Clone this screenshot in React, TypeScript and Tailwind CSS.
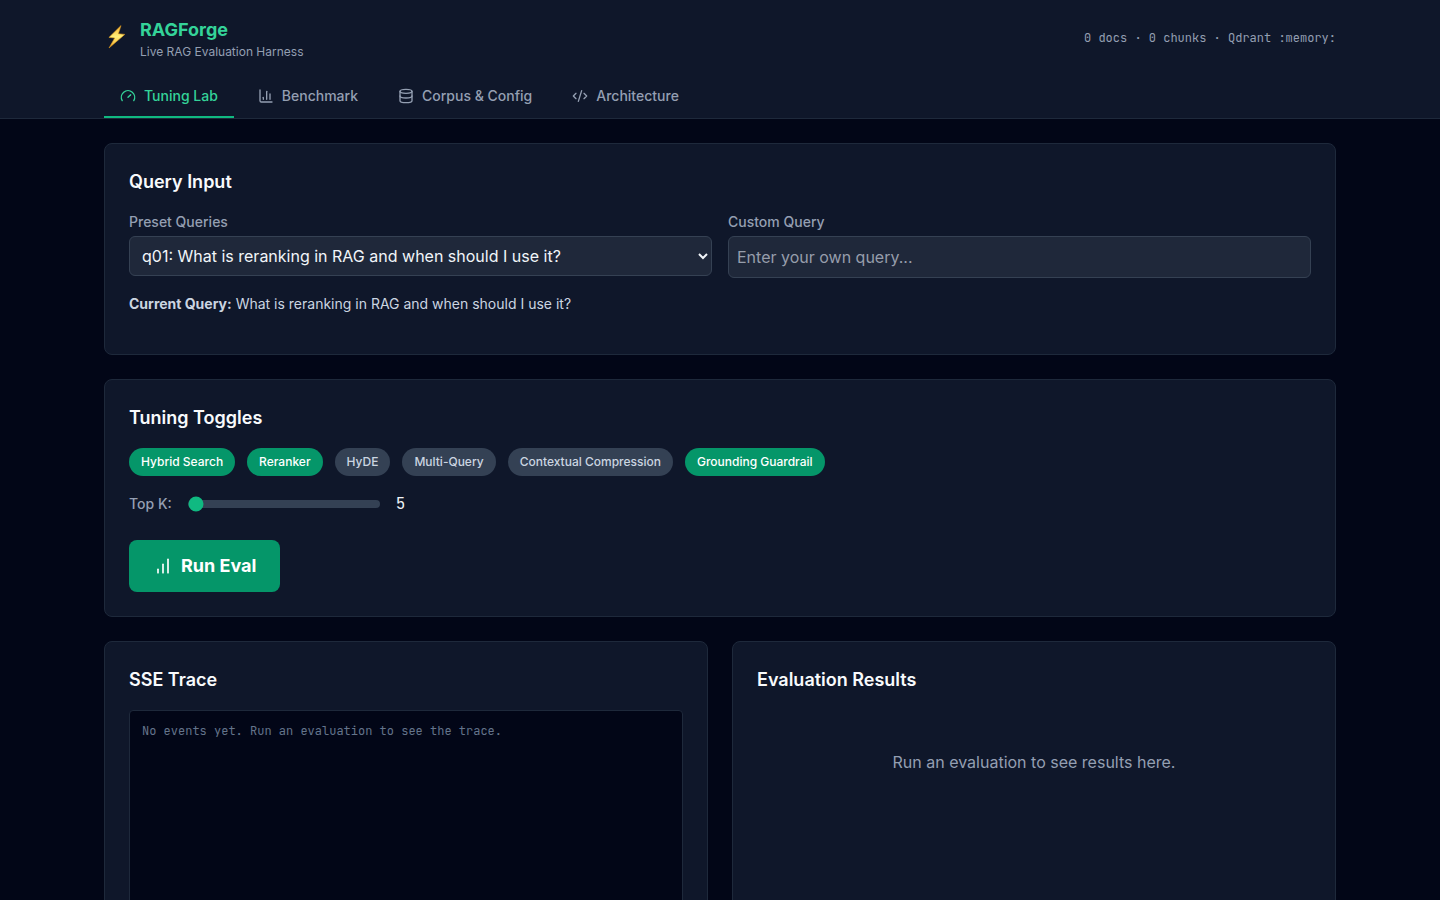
import { useState } from 'react'
import clsx from 'clsx'

const tabs = [
  {
    id: 'tuning',
    label: 'Tuning Lab',
    icon: (
      <>
        <path d="m12 14 4-4" />
        <path d="M3.34 19a10 10 0 1 1 17.32 0" />
      </>
    ),
  },
  {
    id: 'benchmark',
    label: 'Benchmark',
    icon: (
      <>
        <path d="M3 3v16a2 2 0 0 0 2 2h16" />
        <path d="M18 17V9" />
        <path d="M13 17V5" />
        <path d="M8 17v-3" />
      </>
    ),
  },
  {
    id: 'corpus',
    label: 'Corpus & Config',
    icon: (
      <>
        <ellipse cx="12" cy="5" rx="9" ry="3" />
        <path d="M3 5v14a9 3 0 0 0 18 0V5" />
        <path d="M3 12a9 3 0 0 0 18 0" />
      </>
    ),
  },
  {
    id: 'architecture',
    label: 'Architecture',
    icon: (
      <>
        <path d="m18 16 4-4-4-4" />
        <path d="m6 8-4 4 4 4" />
        <path d="m14.5 4-5 16" />
      </>
    ),
  },
]

const initialToggles = [
  { label: 'Hybrid Search', on: true },
  { label: 'Reranker', on: true },
  { label: 'HyDE', on: false },
  { label: 'Multi-Query', on: false },
  { label: 'Contextual Compression', on: false },
  { label: 'Grounding Guardrail', on: true },
]

const presets = [{ id: 'q01', text: 'What is reranking in RAG and when should I use it?' }]

function Icon({ size, children }: { size: number; children: React.ReactNode }) {
  return (
    <svg
      width={size}
      height={size}
      viewBox="0 0 24 24"
      fill="none"
      stroke="currentColor"
      strokeWidth="2"
      strokeLinecap="round"
      strokeLinejoin="round"
    >
      {children}
    </svg>
  )
}

function Bolt() {
  return (
    <svg width="24" height="28" viewBox="0 0 24 28">
      <defs>
        <linearGradient id="bolt" x1="0" y1="0" x2="0" y2="1">
          <stop offset="0" stopColor="#f9b32f" />
          <stop offset="0.5" stopColor="#fff07a" />
          <stop offset="1" stopColor="#f5a623" />
        </linearGradient>
      </defs>
      <path
        d="M17 1.6 4.9 13.4l5.8.6L5 24l15.8-13.6-6.4-.7z"
        fill="url(#bolt)"
        stroke="#d9951c"
        strokeWidth="0.6"
        strokeLinejoin="round"
      />
    </svg>
  )
}

function Card({ title, children }: { title: string; children: React.ReactNode }) {
  return (
    <section className="rounded-lg border border-[#1e293b] bg-[#0f172a] p-6">
      <h2 className="mb-4 text-lg font-semibold text-[#f8fafc]">{title}</h2>
      {children}
    </section>
  )
}

export default function App() {
  const [tab, setTab] = useState('tuning')
  const [toggles, setToggles] = useState(initialToggles)
  const [topK, setTopK] = useState(5)
  const [preset, setPreset] = useState(presets[0].id)
  const [custom, setCustom] = useState('')

  const query = custom || presets.find((p) => p.id === preset)?.text

  return (
    <div className="h-screen overflow-hidden bg-[#020617] font-['Inter',sans-serif] text-[#f1f5f9]">
      <header className="border-b border-[#1e293b] bg-[#0f172a]">
        <div className="mx-auto flex max-w-7xl items-center justify-between px-6 py-4">
          <div className="flex items-center gap-3">
            <Bolt />
            <div>
              <h1 className="text-lg font-bold text-[#34d399]">RAGForge</h1>
              <p className="text-xs text-[#949fb2]">Live RAG Evaluation Harness</p>
            </div>
          </div>
          <div className="font-['JetBrains_Mono','DejaVu_Sans_Mono',monospace] text-xs text-[#949fb2]">
            0 docs · 0 chunks · Qdrant :memory:
          </div>
        </div>
        <nav className="mx-auto flex max-w-7xl gap-2 px-6">
          {tabs.map((t) => (
            <button
              key={t.id}
              onClick={() => setTab(t.id)}
              className={clsx(
                'flex items-center gap-2 border-b-2 px-4 py-2.5 text-sm font-medium',
                tab === t.id ? 'border-[#10b981] text-[#34d399]' : 'border-transparent text-[#949fb2]',
              )}
            >
              <Icon size={16}>{t.icon}</Icon>
              {t.label}
            </button>
          ))}
        </nav>
      </header>

      <main className="mx-auto max-w-7xl space-y-6 px-6 py-6">
        <Card title="Query Input">
          <div className="grid grid-cols-2 items-start gap-4">
            <div>
              <label className="mb-1 block text-sm font-medium text-[#949fb2]">Preset Queries</label>
              <select
                value={preset}
                onChange={(e) => setPreset(e.target.value)}
                className="block h-10 w-full rounded-md border border-[#354153] bg-[#1f283a] p-2 text-[#f1f5f9]"
              >
                {presets.map((p) => (
                  <option key={p.id} value={p.id}>
                    {p.id}: {p.text}
                  </option>
                ))}
              </select>
            </div>
            <div>
              <label className="mb-1 block text-sm font-medium text-[#949fb2]">Custom Query</label>
              <input
                value={custom}
                onChange={(e) => setCustom(e.target.value)}
                placeholder="Enter your own query..."
                className="block w-full rounded-md border border-[#354153] bg-[#1f283a] p-2 placeholder:text-[#969dab]"
              />
            </div>
          </div>
          <p className="my-4 text-sm text-[#cbd5e1]">
            <strong>Current Query:</strong> {query}
          </p>
        </Card>

        <Card title="Tuning Toggles">
          <div className="flex flex-wrap gap-3">
            {toggles.map((t, i) => (
              <button
                key={t.label}
                onClick={() => setToggles(toggles.map((x, j) => (i === j ? { ...x, on: !x.on } : x)))}
                className={clsx(
                  'rounded-full px-3 py-1.5 text-xs font-medium',
                  t.on ? 'bg-[#059669] text-white' : 'bg-[#344154] text-[#cbd5e1]',
                )}
              >
                {t.label}
              </button>
            ))}
          </div>
          <div className="mt-4 flex items-center gap-4">
            <label className="text-sm font-medium text-[#949fb2]">Top K:</label>
            <input
              type="range"
              min={5}
              max={50}
              value={topK}
              onChange={(e) => setTopK(Number(e.target.value))}
              className="h-2 w-48 appearance-none rounded-lg bg-[#344154] accent-[#10b981]"
            />
            <span className="font-['JetBrains_Mono','DejaVu_Sans_Mono',monospace]">{topK}</span>
          </div>
          <button className="mt-6 flex items-center gap-2 rounded-lg bg-[#059669] px-6 py-3 text-lg font-bold text-white">
            <Icon size={20}>
              <path d="M12 20V10" />
              <path d="M18 20V4" />
              <path d="M6 20v-4" />
            </Icon>
            Run Eval
          </button>
        </Card>

        <div className="grid grid-cols-2 gap-6">
          <Card title="SSE Trace">
            <div className="h-96 rounded border border-[#1e293b] bg-[#020617] p-3 font-['JetBrains_Mono','DejaVu_Sans_Mono',monospace] text-xs text-[#64748b]">
              No events yet. Run an evaluation to see the trace.
            </div>
          </Card>
          <Card title="Evaluation Results">
            <div className="py-10 text-center text-[#949fb2]">Run an evaluation to see results here.</div>
          </Card>
        </div>
      </main>
    </div>
  )
}
